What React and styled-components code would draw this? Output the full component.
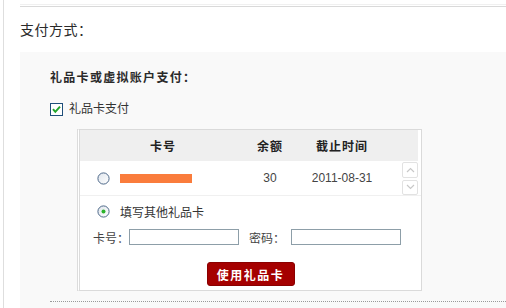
import React from "react";
import styled, { createGlobalStyle } from "styled-components";

const Global = createGlobalStyle`
  html, body { margin: 0; padding: 0; background: #fff; }
  body { font-family: "Liberation Sans", "Noto Sans CJK SC", sans-serif; font-size: 12px; color: #333; }
  * { box-sizing: border-box; }
`;

const Page = styled.div`
  margin-left: 3px;
  border-left: 1px solid #dedede;
  height: 308px;
  overflow: hidden;
  padding-left: 16px;
`;

const TopRule = styled.div`
  margin-top: 4px;
  height: 3px;
  border-top: 1px solid #f0f0f0;
  border-bottom: 1px solid #d9d9d9;
`;

const Heading = styled.h2`
  margin: 13px 0 12px;
  font-size: 14px;
  line-height: 20px;
  font-weight: normal;
  color: #2a2a2a;
  letter-spacing: 0.5px;
`;

const Panel = styled.div`
  background: #f9f9f9;
  margin-right: -10px;
  padding: 18px 0 0 30px;
  height: 260px;
`;

const SubTitle = styled.div`
  font-weight: bold;
  line-height: 16px;
  letter-spacing: 1.3px;
  color: #2a2a2a;
`;

const CheckRow = styled.label`
  display: flex;
  align-items: center;
  gap: 6px;
  margin-top: 15px;
  height: 16px;
  line-height: 16px;
`;

const Box = styled.div`
  margin: 12px 0 0 27px;
  width: 345px;
  height: 162px;
  border: 1px solid #dadada;
  border-left: 3px double #dcdcdc;
  background: #fff;
  position: relative;
  display: flex;
  flex-direction: column;
`;

const HeaderRow = styled.div`
  display: grid;
  grid-template-columns: 166px 48px 96px 1fr;
  height: 31px;
  background: #efefef;
  font-weight: bold;
  letter-spacing: 1px;
  align-items: center;
  text-align: center;
  margin-right: 3px;
  color: #222;
`;

const CardList = styled.div`
  display: flex;
  height: 35px;
  border-bottom: 1px solid #f0f0f0;
`;

const CardRow = styled.div`
  flex: 1;
  display: grid;
  grid-template-columns: 166px 48px 96px;
  align-items: center;
`;

const CardCell = styled.div`
  display: flex;
  align-items: center;
  padding-left: 17px;
  gap: 10px;
`;

const Center = styled.div`
  text-align: center;
  color: #444;
`;

const Masked = styled.span`
  display: inline-block;
  width: 72px;
  height: 9px;
  background: #fa7c3c;
`;

const ScrollBar = styled.div`
  width: 16px;
  margin-right: 3px;
  display: flex;
  flex-direction: column;
  gap: 2px;
  padding-top: 1px;
`;

const ScrollBtn = styled.div`
  height: 17px;
  border: 1px solid #e2e2e2;
  border-radius: 2px;
  display: flex;
  align-items: center;
  justify-content: center;
`;

const OtherRow = styled.label`
  display: flex;
  align-items: center;
  gap: 10px;
  height: 30px;
  padding-left: 17px;
`;

const FieldRow = styled.div`
  display: flex;
  align-items: center;
  height: 22px;
  padding-left: 13px;
  color: #444;
`;

const FieldLabel = styled.span`
  margin-left: ${(p) => p.$gap || 0}px;
`;

const Input = styled.input`
  width: 110px;
  height: 16px;
  margin: 0 0 0 ${(p) => p.$gap || 0}px;
  padding: 0;
  border: 1px solid #8d9ea8;
  background: #fff;
  outline: none;
`;

const ButtonRow = styled.div`
  display: flex;
  justify-content: center;
  margin-top: 14px;
`;

const Button = styled.button`
  width: 88px;
  height: 24px;
  padding: 0;
  background: #a50000;
  border: 1px solid #8a0000;
  border-radius: 3px;
  color: #fff;
  font-family: "Noto Sans CJK SC", sans-serif;
  font-weight: bold;
  font-size: 12px;
  letter-spacing: 1.5px;
`;

const Dotted = styled.div`
  margin-top: 10px;
  border-top: 1px dotted #999;
`;

const Checkbox = () => (
  <svg width="13" height="13" viewBox="0 0 13 13">
    <rect x="0.5" y="0.5" width="12" height="12" fill="#fff" stroke="#1f4f7a" />
    <path d="M3 6.2 L5.3 8.8 L10 3.6" fill="none" stroke="#22a52a" strokeWidth="2" />
  </svg>
);

const Radio = ({ checked }) => (
  <svg width="13" height="13" viewBox="0 0 13 13">
    <defs>
      <linearGradient id="rg" x1="0" y1="0" x2="1" y2="1">
        <stop offset="0" stopColor="#dfe5ec" />
        <stop offset="1" stopColor="#ffffff" />
      </linearGradient>
    </defs>
    <circle cx="6.5" cy="6.5" r="5.6" fill="url(#rg)" stroke="#4d6889" strokeWidth="1" />
    {checked && <circle cx="6.5" cy="6.5" r="2" fill="#2bb32b" />}
  </svg>
);

const Chevron = ({ up }) => (
  <svg width="9" height="6" viewBox="0 0 9 6">
    <path d={up ? "M1 5 L4.5 1.5 L8 5" : "M1 1 L4.5 4.5 L8 1"} fill="none" stroke="#c8c8c8" strokeWidth="1.2" />
  </svg>
);

export default function App() {
  return (
    <>
      <Global />
      <Page>
        <TopRule />
        <Heading>支付方式：</Heading>
        <Panel>
          <SubTitle>礼品卡或虚拟账户支付：</SubTitle>
          <CheckRow>
            <Checkbox />
            礼品卡支付
          </CheckRow>
          <Box>
            <HeaderRow>
              <div>卡号</div>
              <div>余额</div>
              <div>截止时间</div>
              <div />
            </HeaderRow>
            <CardList>
              <CardRow>
                <CardCell>
                  <Radio />
                  <Masked />
                </CardCell>
                <Center>30</Center>
                <Center>2011-08-31</Center>
              </CardRow>
              <ScrollBar>
                <ScrollBtn><Chevron up /></ScrollBtn>
                <ScrollBtn><Chevron /></ScrollBtn>
              </ScrollBar>
            </CardList>
            <OtherRow>
              <Radio checked />
              填写其他礼品卡
            </OtherRow>
            <FieldRow>
              <FieldLabel>卡号：</FieldLabel>
              <Input $gap={0} />
              <FieldLabel $gap={10}>密码：</FieldLabel>
              <Input $gap={6} type="password" />
            </FieldRow>
            <ButtonRow>
              <Button>使用礼品卡</Button>
            </ButtonRow>
          </Box>
          <Dotted />
        </Panel>
      </Page>
    </>
  );
}
